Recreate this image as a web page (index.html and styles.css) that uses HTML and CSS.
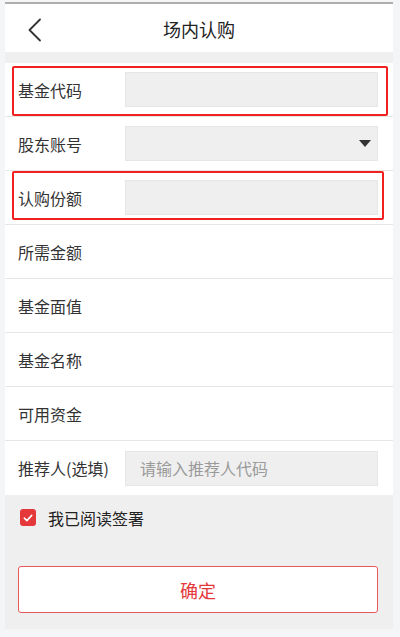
FILE: index.html
```html
<!DOCTYPE html>
<html lang="zh">
<head>
<meta charset="utf-8">
<link rel="stylesheet" href="styles.css">
</head>
<body>
<div class="frame">
  <header class="topbar">
    <svg class="back" width="16" height="24" viewBox="0 0 16 24"><path d="M13 1.5 L2.5 12 L13 22.5" fill="none" stroke="#333" stroke-width="1.8" stroke-linecap="round" stroke-linejoin="round"/></svg>
    <h1 class="title">场内认购</h1>
  </header>
  <div class="gap"></div>
  <div class="form">
    <div class="row">
      <span class="label">基金代码</span>
      <div class="field"></div>
      <div class="mark mark-a"></div>
    </div>
    <div class="row">
      <span class="label">股东账号</span>
      <div class="field select"><span class="caret"></span></div>
    </div>
    <div class="row">
      <span class="label">认购份额</span>
      <div class="field"></div>
      <div class="mark mark-b"></div>
    </div>
    <div class="row"><span class="label">所需金额</span></div>
    <div class="row"><span class="label">基金面值</span></div>
    <div class="row"><span class="label">基金名称</span></div>
    <div class="row"><span class="label">可用资金</span></div>
    <div class="row last">
      <span class="label">推荐人(选填)</span>
      <div class="field"><span class="ph">请输入推荐人代码</span></div>
    </div>
  </div>
  <div class="agree">
    <span class="check"><svg width="10" height="8" viewBox="0 0 10 8"><path d="M1.3 4.2 L3.9 6.6 L8.7 1.4" fill="none" stroke="#fff" stroke-width="1.6" stroke-linecap="round" stroke-linejoin="round"/></svg></span>
    <span class="agree-text">我已阅读签署</span>
  </div>
  <div class="actions">
    <button class="submit">确定</button>
  </div>
</div>
</body>
</html>
```
FILE: styles.css
```css
* { box-sizing: border-box; }
html, body { margin: 0; padding: 0; }
body {
  background: #f4f5f7;
  font-family: "Noto Sans CJK SC", "Noto Sans", sans-serif;
  color: #333;
}
.frame {
  margin: 2px 7px 0 5px;
  width: 388px;
  height: 627px;
  background: #efefef;
  border-top: 2px solid #aeaeae;
}
.topbar {
  height: 48px;
  background: #fff;
  display: flex;
  align-items: center;
  justify-content: center;
  position: relative;
}
.back {
  position: absolute;
  left: 22px;
  top: 14px;
}
.title {
  margin: 0;
  font-size: 18px;
  font-weight: normal;
  color: #222;
  line-height: 1;
  padding-top: 2px;
}
.gap { height: 11px; }
.form { background: #fff; }
.row {
  position: relative;
  height: 54px;
  border-bottom: 1px solid #e6e6e6;
  display: flex;
  align-items: center;
  padding: 0 0 0 13px;
}
.row.last { border-bottom: none; }
.label {
  font-size: 16px;
  width: 107px;
  flex: none;
  color: #333;
}
.field {
  width: 253px;
  height: 35px;
  background: #efefef;
  border: 1px solid #e6e6e6;
  display: flex;
  align-items: center;
  padding-left: 14px;
  position: relative;
}
.ph { font-size: 16px; color: #9a9a9a; }
.caret {
  position: absolute;
  right: 6px;
  top: 13px;
  width: 0;
  height: 0;
  border-left: 6px solid transparent;
  border-right: 6px solid transparent;
  border-top: 7px solid #333;
}
.mark {
  position: absolute;
  border: 2px solid #f21f1f;
  border-radius: 2px;
  pointer-events: none;
}
.mark-a { left: 7px; right: 5px; top: 3px; bottom: 0; }
.mark-b { left: 7px; right: 9px; top: 0px; bottom: 4px; }
.agree {
  height: 45px;
  display: flex;
  align-items: center;
  padding-left: 15px;
}
.check {
  width: 16px;
  height: 17px;
  border-radius: 3px;
  background: #e5383b;
  display: flex;
  align-items: center;
  justify-content: center;
  margin-right: 12px;
}
.agree-text { font-size: 16px; color: #222; }
.actions { padding: 26px 15px 0 13px; }
.submit {
  display: block;
  width: 100%;
  height: 47px;
  background: #fff;
  border: 1px solid #e8585a;
  border-radius: 3px;
  color: #e5383b;
  font-family: inherit;
  font-size: 18px;
  padding: 0;
}
```
